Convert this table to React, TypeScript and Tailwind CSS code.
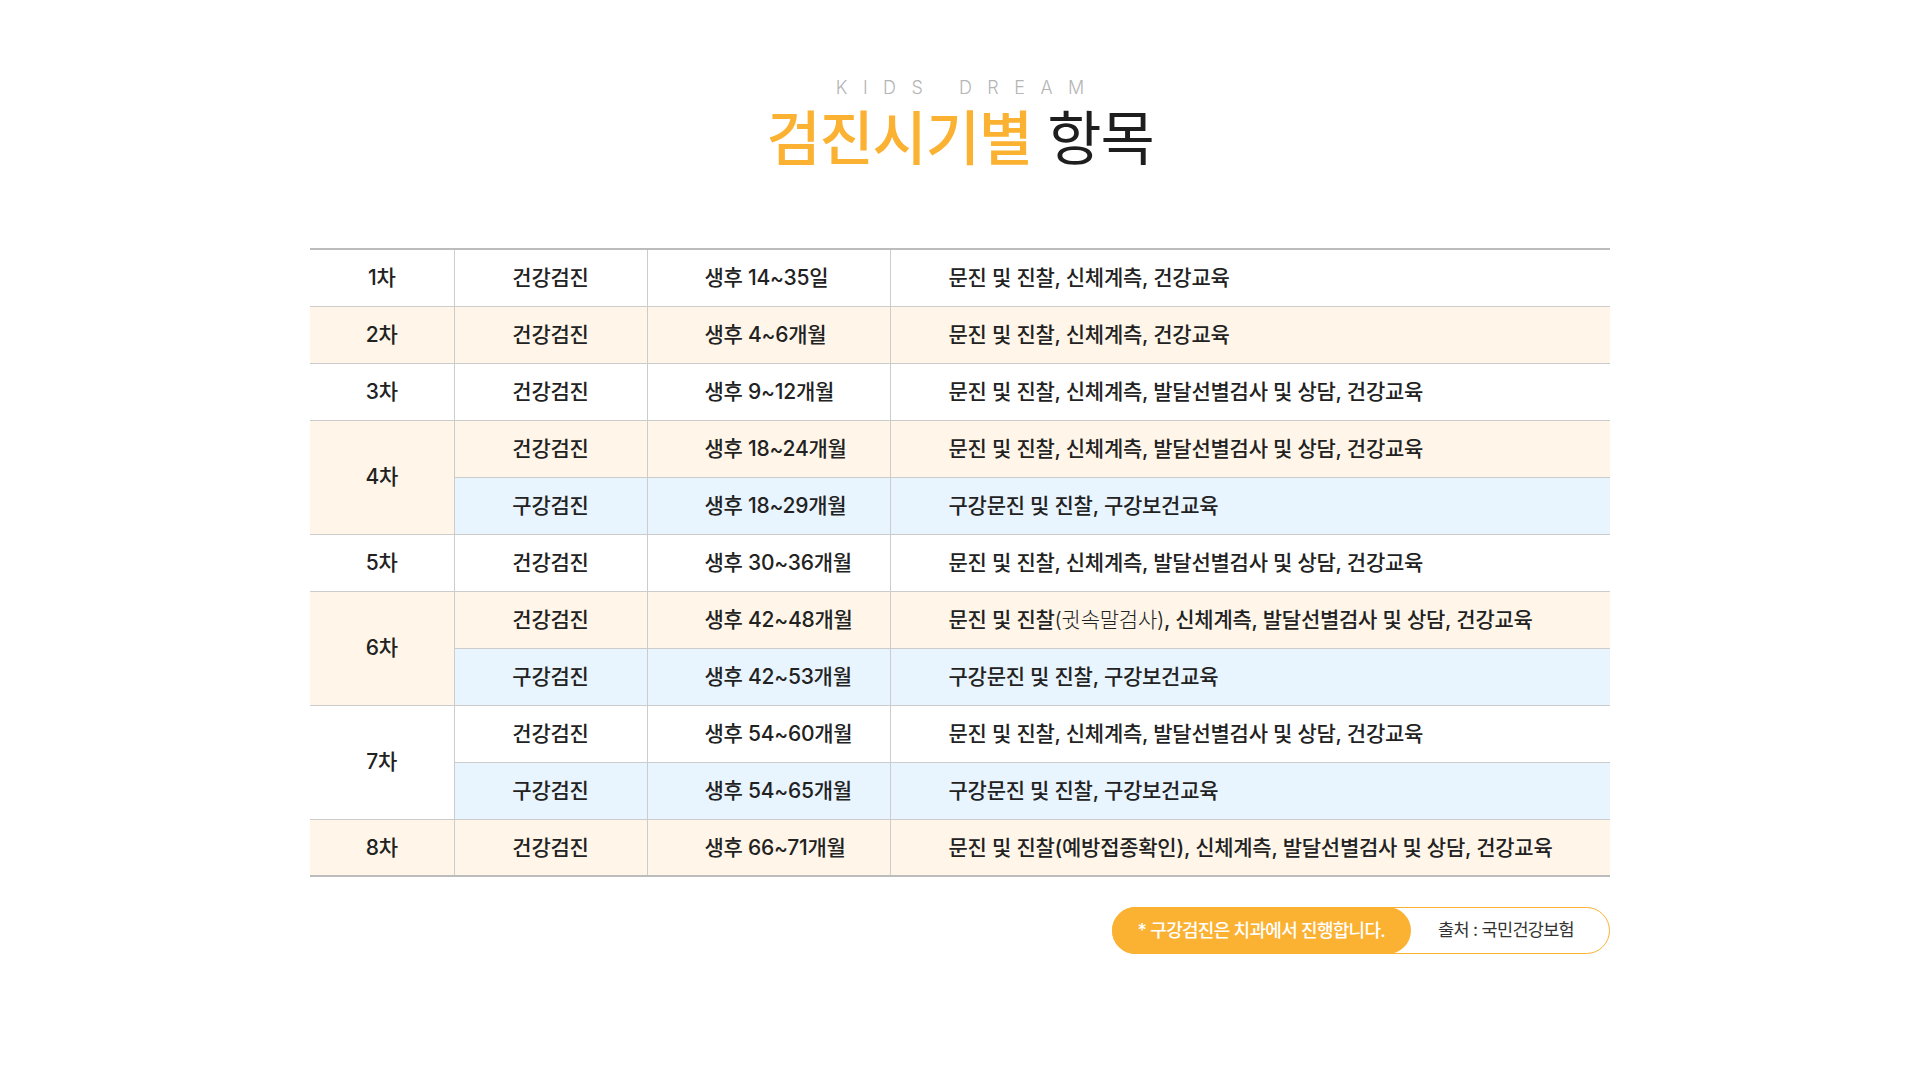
import React from "react";

type Row = {
  round?: string;
  span?: number;
  roundBg?: string;
  type: string;
  period: string;
  items: React.ReactNode;
  bg: string;
};

const BEIGE = "bg-[#fff6e9]";
const BLUE = "bg-[#e8f4fe]";
const WHITE = "bg-white";

const base = "문진 및 진찰, 신체계측, 발달선별검사 및 상담, 건강교육";
const oral = "구강문진 및 진찰, 구강보건교육";

const rows: Row[] = [
  { round: "1차", type: "건강검진", period: "생후 14~35일", items: "문진 및 진찰, 신체계측, 건강교육", bg: WHITE },
  { round: "2차", type: "건강검진", period: "생후 4~6개월", items: "문진 및 진찰, 신체계측, 건강교육", bg: BEIGE },
  { round: "3차", type: "건강검진", period: "생후 9~12개월", items: base, bg: WHITE },
  { round: "4차", span: 2, roundBg: BEIGE, type: "건강검진", period: "생후 18~24개월", items: base, bg: BEIGE },
  { type: "구강검진", period: "생후 18~29개월", items: oral, bg: BLUE },
  { round: "5차", type: "건강검진", period: "생후 30~36개월", items: base, bg: WHITE },
  {
    round: "6차",
    span: 2,
    roundBg: BEIGE,
    type: "건강검진",
    period: "생후 42~48개월",
    items: (
      <>
        문진 및 진찰<span className="font-light">(귓속말검사)</span>, 신체계측, 발달선별검사 및 상담, 건강교육
      </>
    ),
    bg: BEIGE,
  },
  { type: "구강검진", period: "생후 42~53개월", items: oral, bg: BLUE },
  { round: "7차", span: 2, roundBg: WHITE, type: "건강검진", period: "생후 54~60개월", items: base, bg: WHITE },
  { type: "구강검진", period: "생후 54~65개월", items: oral, bg: BLUE },
  {
    round: "8차",
    type: "건강검진",
    period: "생후 66~71개월",
    items: "문진 및 진찰(예방접종확인), 신체계측, 발달선별검사 및 상담, 건강교육",
    bg: BEIGE,
  },
];

export default function App() {
  return (
    <div
      className="w-[1920px] h-[1072px] bg-white text-[#222]"
      style={{ fontFamily: "Inter, 'Noto Sans CJK KR', 'Noto Sans', sans-serif" }}
    >
      <div className="flex flex-col items-center pt-[77px]">
        <div className="text-[18px] leading-[22px] tracking-[0.86em] pl-[0.86em] text-[#b5b5b5] font-light">
          KIDS DREAM
        </div>
        <h1 className="mt-[2px] text-[59px] leading-[76px] tracking-[-0.02em]">
          <span className="text-[#fbb233] font-medium">검진시기별</span>{" "}
          <span className="text-[#1e1e1e]">항목</span>
        </h1>
      </div>

      <div className="w-[1300px] mx-auto mt-[71px]">
        <table className="w-full border-collapse border-y-2 border-[#bcbcbc] text-[21px] font-medium tracking-[-0.012em]">
          <colgroup>
            <col className="w-[144px]" />
            <col className="w-[193px]" />
            <col className="w-[243px]" />
            <col />
          </colgroup>
          <tbody>
            {rows.map((r, i) => (
              <tr key={i} className="h-[57px]">
                {r.round && (
                  <td
                    rowSpan={r.span ?? 1}
                    className={`${r.roundBg ?? r.bg} text-center border-t border-[#cccccc] border-r`}
                  >
                    {r.round}
                  </td>
                )}
                <td className={`${r.bg} text-center border-t border-r border-[#cccccc]`}>{r.type}</td>
                <td className={`${r.bg} pl-[57px] border-t border-r border-[#cccccc]`}>{r.period}</td>
                <td className={`${r.bg} pl-[58px] border-t border-[#cccccc]`}>{r.items}</td>
              </tr>
            ))}
          </tbody>
        </table>

        <div className="flex justify-end mt-[30px]">
          <div className="flex items-center h-[47px] rounded-full border border-[#fbb233]">
            <div className="h-[47px] -my-px -ml-px flex items-center rounded-full bg-[#fbb233] px-[26px] text-white text-[18px] font-medium tracking-[-0.04em]">
              * 구강검진은 치과에서 진행합니다.
            </div>
            <div className="pl-[27px] pr-[35px] text-[17.5px] text-[#333] tracking-[-0.04em]">출처 : 국민건강보험</div>
          </div>
        </div>
      </div>
    </div>
  );
}
